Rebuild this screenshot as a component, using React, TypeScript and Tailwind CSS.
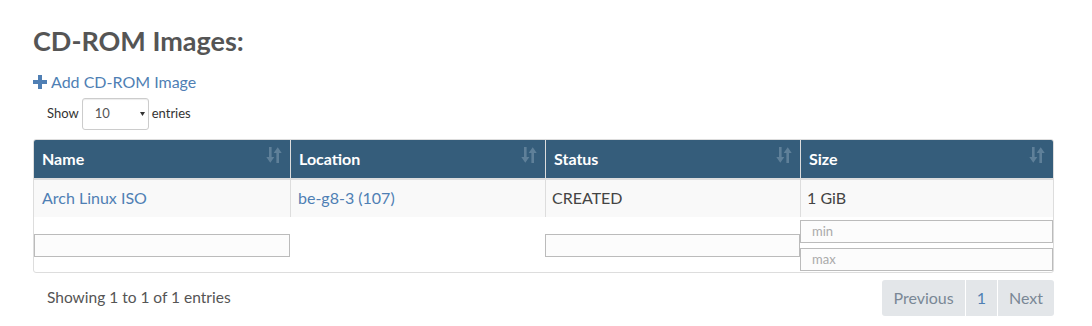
import React from "react";

const SortIcon = () => (
  <svg width="16" height="18" viewBox="0 0 16 18" className="opacity-40">
    <g fill="#9fb6c8">
      <rect x="3" y="1" width="2.6" height="12" />
      <polygon points="0.3,11 8.3,11 4.3,16.8" />
      <rect x="10.4" y="5" width="2.6" height="12" />
      <polygon points="7.7,7 15.7,7 11.7,1.2" />
    </g>
  </svg>
);

export default function App() {
  const headers = ["Name", "Location", "Status", "Size"];
  return (
    <div className="w-[1092px] h-[326px] bg-white text-[#555] overflow-hidden" style={{ fontFamily: "Lato, 'Open Sans', sans-serif" }}>
      <div className="pl-[33px] pr-[38px] pt-[26px]">
        <h2 className="text-[27px] font-bold leading-[30px] text-[#555]">CD-ROM Images:</h2>
        <div className="mt-[16px] flex items-center gap-[4px] text-[16px] leading-[20px] text-[#4f7fb4]">
          <svg width="14" height="14" viewBox="0 0 14 14">
            <rect x="5" y="0" width="4" height="14" fill="#4f7fb4" />
            <rect x="0" y="5" width="14" height="4" fill="#4f7fb4" />
          </svg>
          <span>Add CD-ROM Image</span>
        </div>
        <div className="mt-[6px] ml-[14px] flex items-center text-[13px] text-[#333]">
          <span>Show</span>
          <div className="ml-[3px] mr-[3px] w-[67px] h-[32px] border border-[#ccc] rounded-[3px] flex items-center justify-between pl-[12px] pr-[3px] text-[13px] text-[#555] shadow-[inset_0_1px_1px_rgba(0,0,0,0.075)]">
            <span>10</span>
            <svg width="5" height="4" viewBox="0 0 5 4"><polygon points="0,0 5,0 2.5,4" fill="#333" /></svg>
          </div>
          <span>entries</span>
        </div>
        <div className="mt-[9px] border border-[#ddd] rounded-[3px] overflow-hidden h-[134px]">
          <div className="grid grid-cols-[256px_255px_255px_1fr] bg-[#355d7b] h-[38px] border-b-2 border-[#ddd] box-content">
            {headers.map((h, i) => (
              <div key={h} className={`flex items-center justify-between pl-[8px] pr-[8px] text-white font-bold text-[16px] ${i > 0 ? "border-l border-[#ddd]" : ""}`}>
                <span>{h}</span>
                <div className="self-start mt-[6px]"><SortIcon /></div>
              </div>
            ))}
          </div>
          <div className="grid grid-cols-[256px_255px_255px_1fr] bg-[#f9f9f9] h-[37px] text-[16px]">
            <div className="flex items-center pl-[8px] pb-[1px] text-[#4f7fb4]">Arch Linux ISO</div>
            <div className="flex items-center pl-[7px] pb-[1px] border-l border-[#ddd] text-[#4f7fb4]">be-g8-3 (107)</div>
            <div className="flex items-center pl-[6px] pb-[1px] border-l border-[#ddd] text-[#444]">CREATED</div>
            <div className="flex items-center pl-[6px] pb-[1px] border-l border-[#ddd] text-[#444]">1 GiB</div>
          </div>
          <div className="grid grid-cols-[256px_255px_255px_1fr] h-[56px]">
            <div className="pt-[17px]"><div className="h-[23px] border border-[#bbb] bg-[#fcfcfc]" /></div>
            <div />
            <div className="pt-[17px]"><div className="h-[23px] border border-[#bbb] bg-[#fcfcfc]" /></div>
            <div className="pt-[3px] flex flex-col gap-[5px]">
              <div className="h-[23px] border border-[#bbb] bg-[#fcfcfc] text-[13px] text-[#aaa] pl-[11px] flex items-center">min</div>
              <div className="h-[23px] border border-[#bbb] bg-[#fcfcfc] text-[13px] text-[#aaa] pl-[11px] flex items-center">max</div>
            </div>
          </div>
        </div>
        <div className="mt-[7px] flex items-center justify-between">
          <div className="pl-[14px] text-[15.5px] text-[#555]">Showing 1 to 1 of 1 entries</div>
          <div className="flex h-[36px] rounded-[3px] overflow-hidden text-[16px]">
            <div className="px-[11px] flex items-center bg-[#e3e6e9] text-[#7a8896] border-r border-white">Previous</div>
            <div className="px-[11px] flex items-center bg-[#e3e6e9] text-[#4f7fb4] border-r border-white">1</div>
            <div className="px-[11px] flex items-center bg-[#e3e6e9] text-[#7a8896]">Next</div>
          </div>
        </div>
      </div>
    </div>
  );
}
